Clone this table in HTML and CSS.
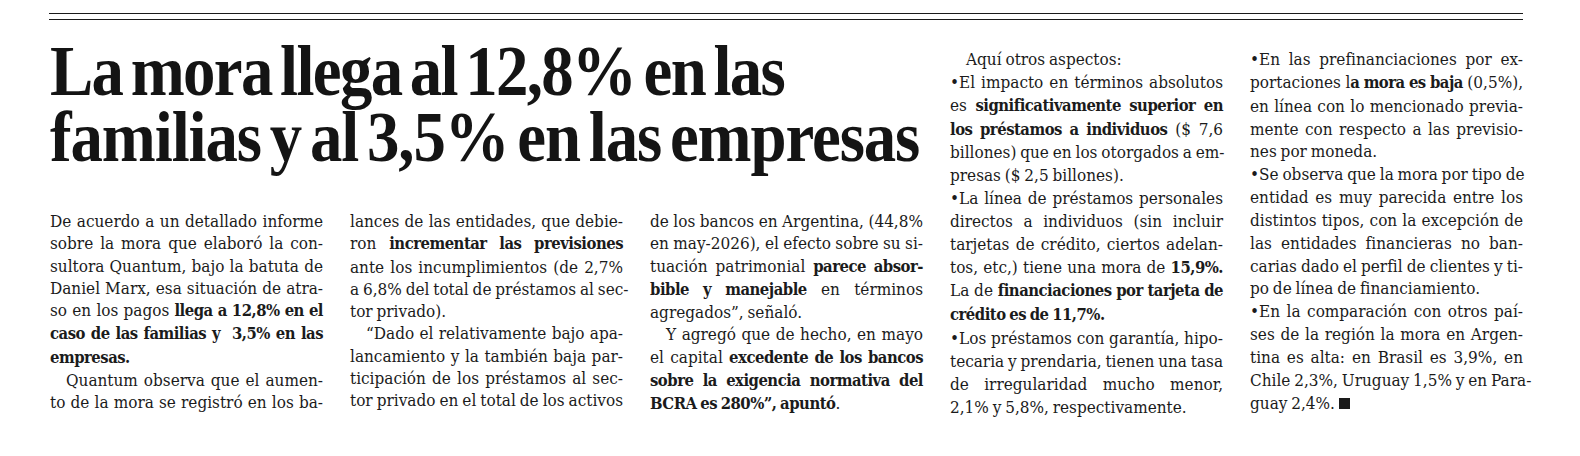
FILE: index.html
```html
<!DOCTYPE html>
<html lang="es">
<head>
<meta charset="utf-8">
<title>La mora llega al 12,8% en las familias</title>
<link rel="stylesheet" href="styles.css">
</head>
<body>
<article class="page">
  <div class="rule"></div>
  <div class="layout">
    <div class="lead">
      <h1 class="headline"><span class="hl hl1">La mora llega al 12,8% en las</span><span class="hl">familias y al 3,5% en las empresas</span></h1>
      <div class="cols">
        <div class="col">
          <span class="l">De acuerdo a un detallado informe</span>
          <span class="l">sobre la mora que elaboró la con-</span>
          <span class="l">sultora Quantum, bajo la batuta de</span>
          <span class="l">Daniel Marx, esa situación de atra-</span>
          <span class="l">so en los pagos <b>llega a 12,8% en el</b></span>
          <span class="l"><b>caso de las familias y &nbsp;3,5% en las</b></span>
          <span class="l e"><b>empresas.</b></span>
          <span class="l ind">Quantum observa que el aumen-</span>
          <span class="l">to de la mora se registró en los ba-</span>
        </div>
        <div class="col">
          <span class="l">lances de las entidades, que debie-</span>
          <span class="l">ron <b>incrementar las previsiones</b></span>
          <span class="l">ante los incumplimientos (de 2,7%</span>
          <span class="l">a 6,8% del total de préstamos al sec-</span>
          <span class="l e">tor privado).</span>
          <span class="l ind">“Dado el relativamente bajo apa-</span>
          <span class="l">lancamiento y la también baja par-</span>
          <span class="l">ticipación de los préstamos al sec-</span>
          <span class="l">tor privado en el total de los activos</span>
        </div>
        <div class="col">
          <span class="l">de los bancos en Argentina, (44,8%</span>
          <span class="l">en may-2026), el efecto sobre su si-</span>
          <span class="l">tuación patrimonial <b>parece absor-</b></span>
          <span class="l"><b>bible y manejable</b> en términos</span>
          <span class="l e">agregados”, señaló.</span>
          <span class="l ind">Y agregó que de hecho, en mayo</span>
          <span class="l">el capital <b>excedente de los bancos</b></span>
          <span class="l"><b>sobre la exigencia normativa del</b></span>
          <span class="l e"><b>BCRA es 280%”, apuntó</b>.</span>
        </div>
      </div>
    </div>
    <div class="side">
      <div class="col">
        <span class="l e ind">Aquí otros aspectos:</span>
        <span class="l">•El impacto en términos absolutos</span>
        <span class="l">es <b>significativamente superior en</b></span>
        <span class="l"><b>los préstamos a individuos</b> ($ 7,6</span>
        <span class="l">billones) que en los otorgados a em-</span>
        <span class="l e">presas ($ 2,5 billones).</span>
        <span class="l">•La línea de préstamos personales</span>
        <span class="l">directos a individuos (sin incluir</span>
        <span class="l">tarjetas de crédito, ciertos adelan-</span>
        <span class="l">tos, etc,) tiene una mora de <b>15,9%.</b></span>
        <span class="l">La de <b>financiaciones por tarjeta de</b></span>
        <span class="l e"><b>crédito es de 11,7%.</b></span>
        <span class="l">•Los préstamos con garantía, hipo-</span>
        <span class="l">tecaria y prendaria, tienen una tasa</span>
        <span class="l">de irregularidad mucho menor,</span>
        <span class="l e">2,1% y 5,8%, respectivamente.</span>
      </div>
      <div class="col">
        <span class="l">•En las prefinanciaciones por ex-</span>
        <span class="l">portaciones l<b>a mora es baja</b> (0,5%),</span>
        <span class="l">en línea con lo mencionado previa-</span>
        <span class="l">mente con respecto a las previsio-</span>
        <span class="l e">nes por moneda.</span>
        <span class="l">•Se observa que la mora por tipo de</span>
        <span class="l">entidad es muy parecida entre los</span>
        <span class="l">distintos tipos, con la excepción de</span>
        <span class="l">las entidades financieras no ban-</span>
        <span class="l">carias dado el perfil de clientes y ti-</span>
        <span class="l e">po de línea de financiamiento.</span>
        <span class="l">•En la comparación con otros paí-</span>
        <span class="l">ses de la región la mora en Argen-</span>
        <span class="l">tina es alta: en Brasil es 3,9%, en</span>
        <span class="l">Chile 2,3%, Uruguay 1,5% y en Para-</span>
        <span class="l e">guay 2,4%. <span class="end"></span></span>
      </div>
    </div>
  </div>
</article>
</body>
</html>
```

FILE: styles.css
```css
html, body {
  margin: 0;
  padding: 0;
  background: #ffffff;
}

.page {
  padding: 13px 0 0 49px;
  width: 1474px;
  color: #1b1b1b;
}

.rule {
  height: 5px;
  border-top: 1px solid #1a1a1a;
  border-bottom: 1px solid #1a1a1a;
}

.layout {
  display: flex;
  gap: 27px;
  padding-left: 1px;
}

.lead {
  width: 873px;
}

.headline {
  margin: 18px 0 0 0;
  font-family: "Liberation Serif", "Times New Roman", serif;
  font-weight: 700;
  font-size: 72px;
  line-height: 66px;
  letter-spacing: -1.2px;
  word-spacing: -7px;
  color: #141414;
  transform: scaleX(0.9);
  transform-origin: left top;
  white-space: nowrap;
}

.hl {
  display: block;
}

.hl1 {
  letter-spacing: -1.8px;
}

.cols {
  display: grid;
  grid-template-columns: repeat(3, 273px);
  column-gap: 27px;
  margin-top: 40px;
  line-height: 22.3px;
}

.side {
  display: grid;
  grid-template-columns: repeat(2, 273px);
  column-gap: 27px;
  align-content: start;
  margin-top: 28px;
  line-height: 22.85px;
}

.col {
  font-family: "DejaVu Serif", "Liberation Serif", serif;
  font-stretch: condensed;
  font-size: 17px;
  letter-spacing: 0;
  word-spacing: -1px;
}

.col b {
  font-weight: 700;
  font-size: 16.5px;
  letter-spacing: -0.5px;
}

.l {
  display: block;
  white-space: nowrap;
  text-align: justify;
  text-align-last: justify;
}

.l.e {
  text-align-last: left;
}

.l.ind {
  padding-left: 16px;
}

.end {
  display: inline-block;
  width: 11px;
  height: 11px;
  background: #1a1a1a;
  vertical-align: 0;
}
```
